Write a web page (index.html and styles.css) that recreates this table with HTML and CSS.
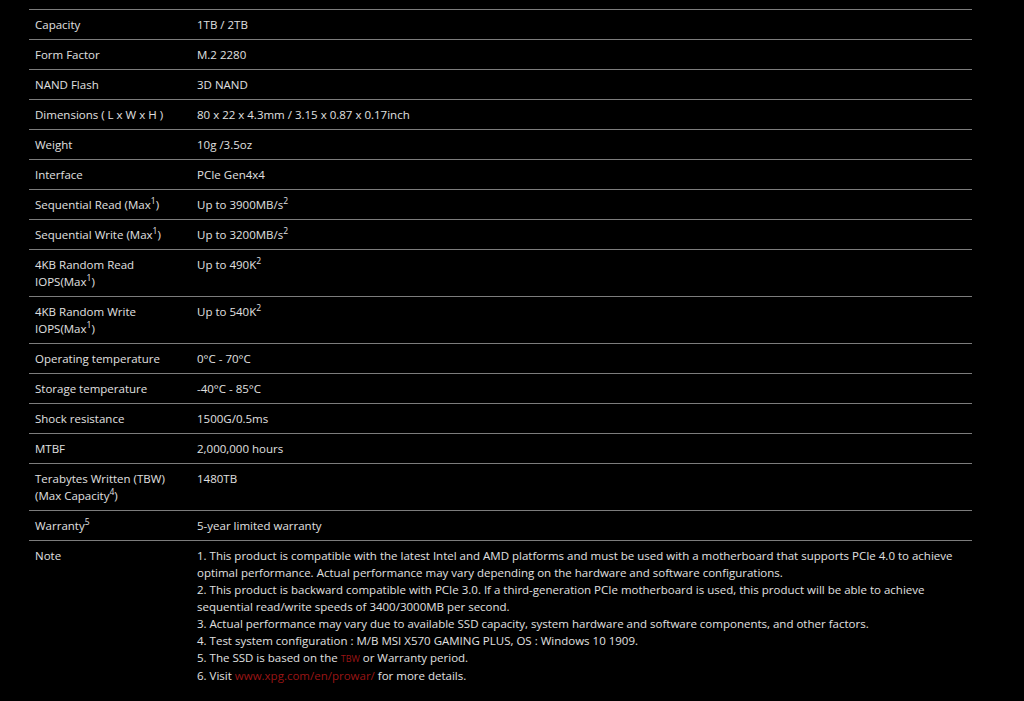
FILE: index.html
```html
<!DOCTYPE html>
<html lang="en">
<head>
<meta charset="utf-8">
<title>Specifications</title>
<link rel="stylesheet" href="styles.css">
</head>
<body>
<div class="page">
<table class="spec">
<tbody>
<tr><td class="k">Capacity</td><td class="v">1TB / 2TB</td></tr>
<tr><td class="k">Form Factor</td><td class="v">M.2 2280</td></tr>
<tr><td class="k">NAND Flash</td><td class="v">3D NAND</td></tr>
<tr><td class="k">Dimensions ( L x W x H )</td><td class="v">80 x 22 x 4.3mm / 3.15 x 0.87 x 0.17inch</td></tr>
<tr><td class="k">Weight</td><td class="v">10g /3.5oz</td></tr>
<tr><td class="k">Interface</td><td class="v">PCIe Gen4x4</td></tr>
<tr><td class="k">Sequential Read (Max<sup>1</sup>)</td><td class="v">Up to 3900MB/s<sup>2</sup></td></tr>
<tr><td class="k">Sequential Write (Max<sup>1</sup>)</td><td class="v">Up to 3200MB/s<sup>2</sup></td></tr>
<tr><td class="k">4KB Random Read<br>IOPS(Max<sup>1</sup>)</td><td class="v">Up to 490K<sup>2</sup></td></tr>
<tr><td class="k">4KB Random Write<br>IOPS(Max<sup>1</sup>)</td><td class="v">Up to 540K<sup>2</sup></td></tr>
<tr><td class="k">Operating temperature</td><td class="v">0°C - 70°C</td></tr>
<tr><td class="k">Storage temperature</td><td class="v">-40°C - 85°C</td></tr>
<tr><td class="k">Shock resistance</td><td class="v">1500G/0.5ms</td></tr>
<tr><td class="k">MTBF</td><td class="v">2,000,000 hours</td></tr>
<tr><td class="k">Terabytes Written (TBW)<br>(Max Capacity<sup>4</sup>)</td><td class="v">1480TB</td></tr>
<tr><td class="k">Warranty<sup>5</sup></td><td class="v">5-year limited warranty</td></tr>
<tr class="last"><td class="k">Note</td><td class="v">1. This product is compatible with the latest Intel and AMD platforms and must be used with a motherboard that supports PCIe 4.0 to achieve optimal performance. Actual performance may vary depending on the hardware and software configurations.<br>2. This product is backward compatible with PCIe 3.0. If a third-generation PCIe motherboard is used, this product will be able to achieve sequential read/write speeds of 3400/3000MB per second.<br>3. Actual performance may vary due to available SSD capacity, system hardware and software components, and other factors.<br>4. Test system configuration : M/B MSI X570 GAMING PLUS, OS : Windows 10 1909.<br>5. The SSD is based on the <a class="red small" href="#">TBW</a> or Warranty period.<br>6. Visit <a class="red" href="#">www.xpg.com/en/prowar/</a> for more details.</td></tr>
</tbody>
</table>
</div>
</body>
</html>
```
FILE: styles.css
```css
html, body {
  margin: 0;
  padding: 0;
  background: #000;
}
body {
  font-family: "Open Sans", "Liberation Sans", sans-serif;
  font-size: 11.5px;
  color: #e0e0e0;
}
.page {
  padding: 9px 52px 0 29px;
}
.spec {
  width: 943px;
  border-collapse: collapse;
  border-top: 1px solid #7c7c7c;
}
.spec td {
  padding: 6px 6px;
  height: 17px;
  line-height: 17px;
  vertical-align: top;
  border-bottom: 1px solid #7c7c7c;
  text-align: left;
}
.spec tr.last td {
  border-bottom: none;
}
.spec .k {
  width: 150px;
}
.spec sup {
  font-size: 8.5px;
  line-height: 0;
  vertical-align: baseline;
  position: relative;
  top: -0.55em;
}
.red {
  color: #9a1515;
  text-decoration: none;
}
.small {
  font-size: 9px;
}
```
